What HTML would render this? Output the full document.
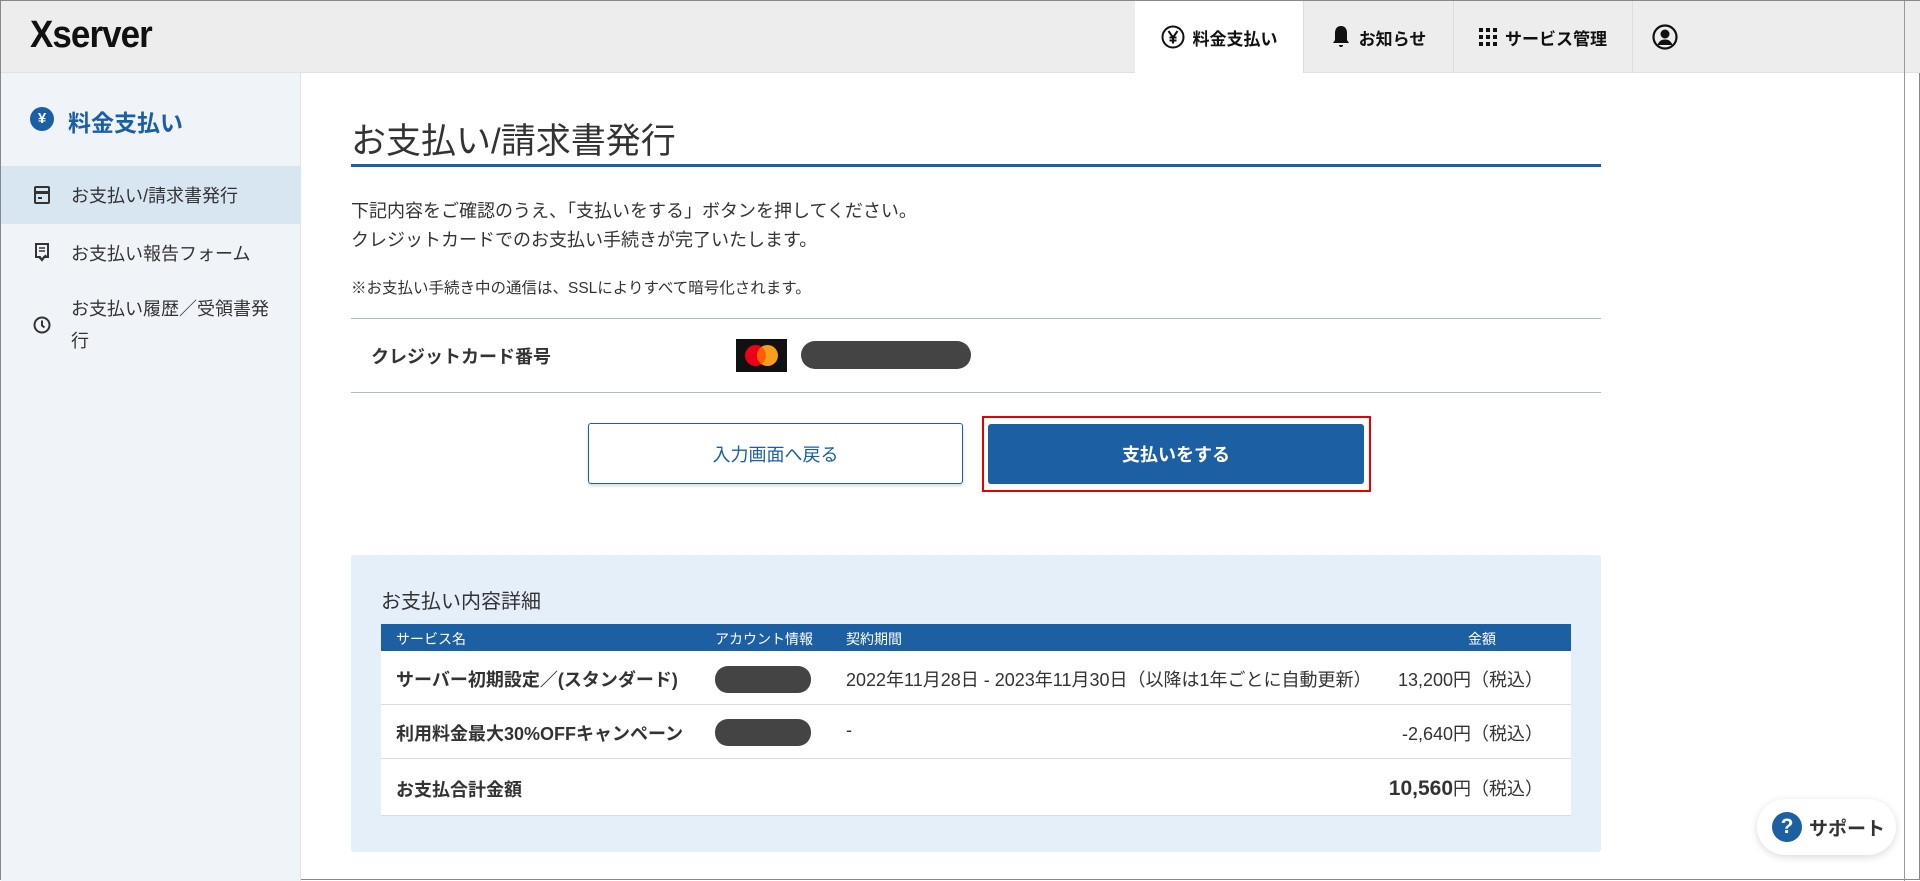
<!DOCTYPE html>
<html><head><meta charset="utf-8"><style>
*{margin:0;padding:0;box-sizing:border-box}
body{width:1920px;height:880px;overflow:hidden;background:#fff;font-family:"Liberation Sans","Noto Sans CJK JP",sans-serif;color:#333;position:relative;border:1px solid #888}
.abs{position:absolute}
.hdr{left:0;top:0;width:1920px;height:72px;background:#ededed;border-bottom:1px solid #e2e2e2}
.logo{left:29px;top:13px;font-size:38px;font-weight:bold;color:#111;letter-spacing:-1px;transform:scaleX(.92);transform-origin:left}
.tab{top:0;height:72px;display:flex;align-items:center;justify-content:center;font-size:17px;font-weight:bold;color:#111;border-left:1px solid #ddd;gap:8px}
.side{left:0;top:72px;width:300px;height:808px;background:#f0f4f8;border-right:1px solid #dde3ea}
.mi{left:0;width:300px;font-size:18px;color:#333;display:flex;align-items:center}
.mi span.t{position:absolute;left:70px}
.main{left:350px;width:1250px}
</style></head><body>
<div class="abs hdr"></div>
<div class="abs logo">Xserver</div>
<div class="abs tab" style="left:1134px;width:168px;background:#fff;border-left:none">
<svg width="24" height="24" viewBox="0 0 24 24"><circle cx="12" cy="12" r="10.5" fill="none" stroke="#111" stroke-width="2"/><path d="M7.5 6l4.5 6.5 4.5-6.5M12 12.5V18.5M8.5 12.5h7M8.5 15.5h7" fill="none" stroke="#111" stroke-width="2"/></svg>料金支払い</div>
<div class="abs tab" style="left:1302px;width:150px"><svg width="20" height="26" viewBox="0 0 20 26"><path d="M10 2c-4 0-6 3-6 7v7l-2 3h16l-2-3V9c0-4-2-7-6-7zM8 21a2 2 0 004 0z" fill="#111"/></svg>お知らせ</div>
<div class="abs tab" style="left:1452px;width:179px"><svg width="18" height="18" viewBox="0 0 18 18" fill="#111"><rect x="0" y="0" width="4" height="4"/><rect x="7" y="0" width="4" height="4"/><rect x="14" y="0" width="4" height="4"/><rect x="0" y="7" width="4" height="4"/><rect x="7" y="7" width="4" height="4"/><rect x="14" y="7" width="4" height="4"/><rect x="0" y="14" width="4" height="4"/><rect x="7" y="14" width="4" height="4"/><rect x="14" y="14" width="4" height="4"/></svg>サービス管理</div>
<div class="abs tab" style="left:1631px;width:64px"><svg width="26" height="26" viewBox="0 0 26 26"><circle cx="13" cy="13" r="11.5" fill="none" stroke="#111" stroke-width="2.2"/><circle cx="13" cy="10" r="4.5" fill="#111"/><path d="M5.5 21c1.5-4 4-5.5 7.5-5.5s6 1.5 7.5 5.5z" fill="#111"/></svg></div>
<div class="abs" style="left:1903px;top:0;width:1px;height:880px;background:#999"></div>

<div class="abs side"></div>
<div class="abs" style="left:29px;top:106px;width:24px;height:24px;border-radius:50%;background:#1a5fa5;color:#fff;font-size:15px;font-weight:bold;text-align:center;line-height:24px">¥</div>
<div class="abs" style="left:67px;top:103px;font-size:23px;font-weight:bold;color:#1a5fa5">料金支払い</div>
<div class="abs mi" style="top:165px;height:58px;background:#d8e6f2"><svg style="position:absolute;left:33px" width="16" height="18" viewBox="0 0 16 18"><rect x="1" y="1" width="14" height="16" rx="1" fill="none" stroke="#333" stroke-width="2"/><rect x="1" y="5" width="14" height="3" fill="#333"/><rect x="4" y="11" width="4" height="2" fill="#333"/></svg><span class="t">お支払い/請求書発行</span></div>
<div class="abs mi" style="top:223px;height:58px"><svg style="position:absolute;left:33px" width="16" height="20" viewBox="0 0 16 20"><path d="M2 1h12v13h-4l-2 3-2-3H2z" fill="none" stroke="#333" stroke-width="2"/><path d="M5 5h6M5 8h6" stroke="#333" stroke-width="1.5"/><path d="M5 14l3 3 4-5" fill="none" stroke="#333" stroke-width="2"/></svg><span class="t">お支払い報告フォーム</span></div>
<div class="abs mi" style="top:290px;height:60px"><svg style="position:absolute;left:32px;top:25px" width="18" height="18" viewBox="0 0 18 18"><circle cx="9" cy="9" r="7.5" fill="none" stroke="#333" stroke-width="2"/><path d="M9 4.5V9.5l2.5 2" fill="none" stroke="#333" stroke-width="2"/></svg><span class="t" style="top:2px;line-height:32px">お支払い履歴／受領書発<br>行</span></div>

<div class="abs main" style="top:112px;font-size:35px;color:#333">お支払い/請求書発行</div>
<div class="abs main" style="top:163px;height:3px;background:#1a5fa5"></div>
<div class="abs main" style="top:196px;font-size:18px;line-height:29px;color:#333">下記内容をご確認のうえ、「支払いをする」ボタンを押してください。<br>クレジットカードでのお支払い手続きが完了いたします。</div>
<div class="abs main" style="top:275px;font-size:15.5px;color:#333">※お支払い手続き中の通信は、SSLによりすべて暗号化されます。</div>
<div class="abs main" style="top:317px;height:1px;background:#a9bccf"></div>
<div class="abs main" style="top:391px;height:1px;background:#a9bccf"></div>
<div class="abs" style="left:370px;top:342px;font-size:18px;font-weight:bold;color:#333">クレジットカード番号</div>
<svg class="abs" style="left:735px;top:338px" width="51" height="33" viewBox="0 0 51 33"><rect width="51" height="33" fill="#111"/><circle cx="19.5" cy="16.5" r="10.5" fill="#eb001b"/><circle cx="31.5" cy="16.5" r="10.5" fill="#f79e1b"/><path d="M25.5 7.9a10.5 10.5 0 010 17.2 10.5 10.5 0 010-17.2z" fill="#ff5f00"/></svg>
<div class="abs" style="left:800px;top:340px;width:170px;height:28px;border-radius:14px;background:#444"></div>

<div class="abs" style="left:587px;top:422px;width:375px;height:61px;border:1px solid #1a5fa5;border-radius:3px;box-shadow:0 2px 3px rgba(0,0,0,.15);color:#1a5fa5;font-size:18px;display:flex;align-items:center;justify-content:center">入力画面へ戻る</div>
<div class="abs" style="left:981px;top:415px;width:389px;height:76px;border:2px solid #e60000"></div>
<div class="abs" style="left:987px;top:423px;width:376px;height:60px;background:#1d5fa3;border-radius:3px;color:#fff;font-size:18px;font-weight:bold;display:flex;align-items:center;justify-content:center">支払いをする</div>

<div class="abs" style="left:350px;top:554px;width:1250px;height:297px;background:#e4eff9;border-radius:3px"></div>
<div class="abs" style="left:380px;top:584px;font-size:20px;color:#333">お支払い内容詳細</div>
<div class="abs" style="left:380px;top:623px;width:1190px;height:27px;background:#1d5fa3;color:#fff;font-size:14px">
<span class="abs" style="left:15px;top:5px">サービス名</span><span class="abs" style="left:334px;top:5px">アカウント情報</span><span class="abs" style="left:465px;top:5px">契約期間</span><span class="abs" style="left:1087px;top:5px">金額</span></div>
<div class="abs" style="left:380px;top:650px;width:1190px;height:165px;background:#fff"></div>
<div class="abs" style="left:380px;top:703px;width:1190px;height:1px;background:#d5dde6"></div>
<div class="abs" style="left:380px;top:757px;width:1190px;height:1px;background:#d5dde6"></div>
<div class="abs" style="left:380px;top:814px;width:1190px;height:1px;background:#d5dde6"></div>
<div class="abs" style="left:395px;top:665px;font-size:18px;font-weight:bold">サーバー初期設定／(スタンダード)</div>
<div class="abs" style="left:714px;top:665px;width:96px;height:27px;border-radius:13px;background:#444"></div>
<div class="abs" style="left:845px;top:665px;font-size:18px">2022年11月28日 - 2023年11月30日（以降は1年ごとに自動更新）</div>
<div class="abs" style="right:376px;top:665px;font-size:18px">13,200円（税込）</div>
<div class="abs" style="left:395px;top:719px;font-size:18px;font-weight:bold">利用料金最大30%OFFキャンペーン</div>
<div class="abs" style="left:714px;top:718px;width:96px;height:27px;border-radius:13px;background:#444"></div>
<div class="abs" style="left:845px;top:719px;font-size:18px">-</div>
<div class="abs" style="right:376px;top:719px;font-size:18px">-2,640円（税込）</div>
<div class="abs" style="left:395px;top:775px;font-size:18px;font-weight:bold">お支払合計金額</div>
<div class="abs" style="right:376px;top:774px;font-size:18px"><b style="font-size:21px">10,560</b>円（税込）</div>

<div class="abs" style="left:1756px;top:798px;width:139px;height:56px;border-radius:28px;background:#fff;box-shadow:0 2px 8px rgba(0,0,0,.15);display:flex;align-items:center;font-size:19px;font-weight:bold;color:#333">
<span style="margin-left:15px;width:30px;height:30px;border-radius:50%;background:#1d5fa3;color:#fff;text-align:center;line-height:30px;font-size:21px;margin-right:7px">?</span>サポート</div>
</body></html>
